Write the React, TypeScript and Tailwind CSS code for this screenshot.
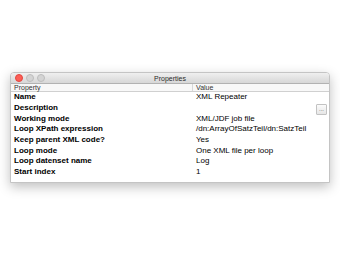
const rows: [string, string][] = [
  ["Name", "XML Repeater"],
  ["Description", ""],
  ["Working mode", "XML/JDF job file"],
  ["Loop XPath expression", "/dn:ArrayOfSatzTeil/dn:SatzTeil"],
  ["Keep parent XML code?", "Yes"],
  ["Loop mode", "One XML file per loop"],
  ["Loop datenset name", "Log"],
  ["Start index", "1"],
];

const App = () => {
  return (
    <div
      className="w-[340px] h-[260px] bg-white pt-[72px] pl-[10px]"
      style={{ fontFamily: '"Liberation Sans", Arial, sans-serif' }}
    >
      <div className="w-[320px] h-[111px] flex flex-col bg-white border border-[#c4c4c4] rounded-t-[4px] overflow-hidden shadow-[0_4px_12px_rgba(0,0,0,0.25)]">
        {/* title bar */}
        <div className="h-[11px] shrink-0 grid grid-cols-[1fr_auto_1fr] items-center bg-gradient-to-b from-[#efefef] to-[#d7d7d7] border-b border-[#b2b2b2]">
          <div className="flex items-center gap-[3px] pl-[4px]">
            <span className="w-[8px] h-[8px] rounded-full bg-[#fc5f57] border border-[#e2463f]" />
            <span className="w-[8px] h-[8px] rounded-full bg-[#d4d4d4] border border-[#bcbcbc]" />
            <span className="w-[8px] h-[8px] rounded-full bg-[#d4d4d4] border border-[#bcbcbc]" />
          </div>
          <div className="text-[7px] leading-none text-[#2a2a2a]">Properties</div>
          <div />
        </div>

        {/* column header */}
        <div className="h-[8px] shrink-0 flex text-[7px] leading-none text-[#333] bg-[#f8f8f8] border-b border-[#d0d0d0]">
          <div className="w-[182px] pl-[3px] flex items-center border-r border-[#d8d8d8]">Property</div>
          <div className="flex-1 pl-[3px] flex items-center">Value</div>
        </div>

        {/* rows */}
        <div className="flex flex-col text-[8px] leading-none text-black">
          {rows.map(([k, v]) => (
            <div key={k} className="h-[10.67px] flex items-center">
              <div className="w-[182px] pl-[3px] font-bold">{k}</div>
              <div className="flex-1 pl-[3px] flex items-center justify-between pr-[2px]">
                <span>{v}</span>
                {k === "Description" && (
                  <span className="w-[11px] h-[11px] mt-[3px] flex items-center justify-center bg-gradient-to-b from-[#fbfbfb] to-[#e6e6e6] border border-[#c2c2c2] rounded-[1px] text-[6px] text-[#555] leading-none">
                    ...
                  </span>
                )}
              </div>
            </div>
          ))}
        </div>
      </div>
    </div>
  );
};

export default App;
